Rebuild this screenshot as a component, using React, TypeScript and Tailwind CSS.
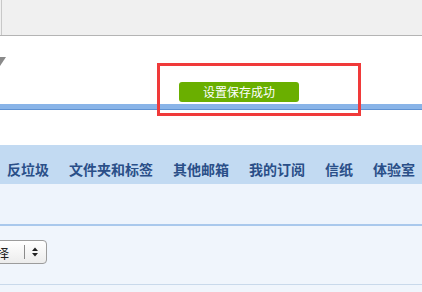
const tabs = ["反垃圾", "文件夹和标签", "其他邮箱", "我的订阅", "信纸", "体验室"];

const App = () => {
  return (
    <div className="relative h-[292px] w-[422px] overflow-hidden bg-[#f0f5fc] font-['Noto_Sans_CJK_SC',sans-serif]">
      {/* browser chrome strip */}
      <div className="h-[36px] border-b border-[#b4b4b4] bg-[#f0f0f0] pl-[1px]">
        <div className="h-full w-[1px] bg-[#c8c8c8]" />
      </div>

      {/* header */}
      <div className="h-[68px] bg-white pt-[21px]">
        <svg width="8" height="9" viewBox="0 0 8 9" className="-ml-[2px] block">
          <polygon points="-4,0 8,0 2,9" fill="#8a8a8a" />
        </svg>
      </div>
      <div className="h-[6px] border-b border-[#5f92d2] bg-[#89b4e8]" />
      <div className="h-[35px] bg-white" />

      {/* tabs */}
      <div className="flex h-[39px] gap-[20px] bg-[#c2daf2] pl-[7px] pt-[16px]">
        {tabs.map((tab) => (
          <span
            key={tab}
            className="whitespace-nowrap text-[14px] font-bold leading-[16px] text-[#2a4f88]"
          >
            {tab}
          </span>
        ))}
      </div>
      <div className="h-[40px] bg-[#eef4fc]" />
      <div className="h-[2px] bg-[#a9c8ec]" />

      {/* settings row */}
      <div className="h-[58px] pt-[14px]">
        <div className="-ml-[12px] flex h-[24px] w-[59px] items-center rounded-[4px] border border-[#9c9c9c] bg-gradient-to-b from-white to-[#ececec]">
          <span className="pl-[7px] text-[13px] leading-none text-[#222]">择</span>
          <div className="ml-[15px] h-[14px] w-[1px] bg-[#8a8a8a]" />
          <svg width="6" height="12" viewBox="0 0 6 12" className="ml-[7px]">
            <polygon points="0,5 6,5 3,1.5" fill="#222" />
            <polygon points="0,7 6,7 3,10.5" fill="#222" />
          </svg>
        </div>
      </div>
      <div className="h-[1px] bg-[#c9d9eb]" />

      {/* toast */}
      <div className="absolute left-[179px] top-[82px] flex h-[20px] w-[120px] items-center justify-center rounded-[3px] bg-[#6aaf00] text-[12px] leading-none text-white">
        设置保存成功
      </div>

      {/* highlight frame */}
      <div className="absolute left-[157px] top-[63px] h-[53px] w-[204px] border-[3px] border-[#f03a3a]" />
    </div>
  );
};

export default App;
